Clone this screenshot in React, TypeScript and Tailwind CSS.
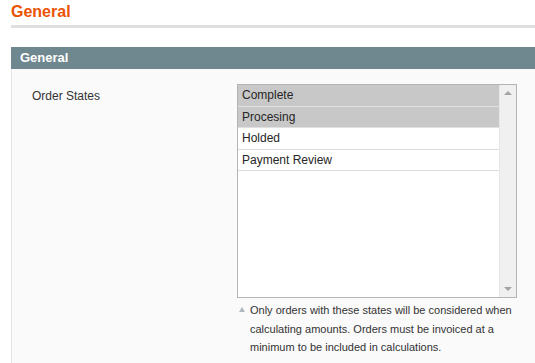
const options = [
  { label: "Complete", selected: true },
  { label: "Procesing", selected: true },
  { label: "Holded", selected: false },
  { label: "Payment Review", selected: false },
];

export default function App() {
  return (
    <div className="w-[535px] h-[363px] overflow-hidden bg-white pl-[11px] font-['Liberation_Sans',Arial,sans-serif]">
      <h1 className="pt-[3px] text-[16px] leading-[18px] font-bold text-[#eb5202]">General</h1>
      <div className="mt-[4px] h-[3px] bg-[#dfdfdf]" />
      <div className="mt-[19px] bg-[#6f878f] h-[22px] pl-[9px] flex items-center text-white text-[13px] font-bold">
        General
      </div>
      <div className="bg-[#fafafa] border-l border-[#e3e3e3] h-[300px] pt-[15px] flex">
        <div className="w-[225px] pl-[20px] pt-[3px] text-[12px] text-[#333]">Order States</div>
        <div className="w-[280px]">
          <div className="h-[214px] border border-[#b4b4b4] bg-white flex">
            <ul className="flex-1">
              {options.map((o) => (
                <li
                  key={o.label}
                  className={`h-[21.5px] pl-[4px] flex items-center text-[12px] text-[#262626] border-b border-[#dcdcdc] ${o.selected ? "bg-[#c8c8c8] border-[#e0e0e0]" : ""}`}
                >
                  {o.label}
                </li>
              ))}
            </ul>
            <div className="w-[17px] bg-[#f0f0f0] border-l border-[#e6e6e6] flex flex-col justify-between items-center py-[6px]">
              <span className="block w-0 h-0 border-x-[4px] border-x-transparent border-b-[4px] border-b-[#a3a3a3]" />
              <span className="block w-0 h-0 border-x-[4px] border-x-transparent border-t-[4px] border-t-[#a3a3a3]" />
            </div>
          </div>
          <div className="flex mt-[3px] text-[11px] leading-[18.5px] text-[#333]">
            <span className="w-[13px] shrink-0 pl-[2px] pt-[6px]">
              <span className="block w-0 h-0 border-x-[3.5px] border-x-transparent border-b-[5px] border-b-[#b0b8be]" />
            </span>
            <p>
              Only orders with these states will be considered when calculating amounts. Orders must be invoiced at a
              minimum to be included in calculations.
            </p>
          </div>
        </div>
      </div>
    </div>
  );
}
